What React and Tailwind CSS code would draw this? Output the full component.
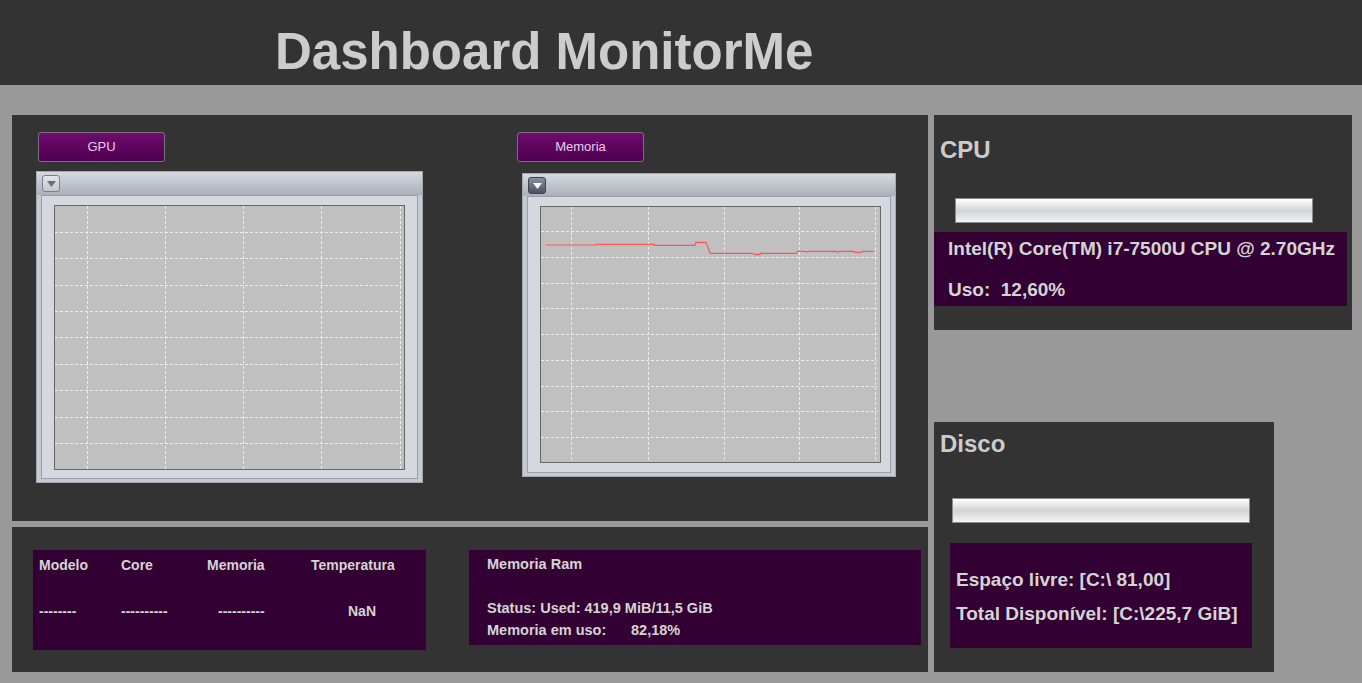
import React from "react";

const gpuChart = {
  w: 387,
  h: 312,
  titleH: 24,
  plotW: 351,
  plotH: 265,
  vx: [33, 111, 189, 267, 346],
  hy: [27, 53, 80, 106, 132, 159, 185, 212, 238],
  line: null,
  focused: false,
};

const memChart = {
  w: 374,
  h: 304,
  titleH: 23,
  plotW: 341,
  plotH: 257,
  vx: [31, 108, 184, 259, 335],
  hy: [25, 51, 77, 102, 128, 154, 180, 205, 231],
  line: [
    [6, 39],
    [56.7, 39],
    [56.7, 38.3],
    [114.3, 38.3],
    [114.3, 39.3],
    [155, 39.3],
    [156, 36.3],
    [166, 36.3],
    [170.3, 47.3],
    [212.7, 47.3],
    [214.3, 48.3],
    [220.3, 48.3],
    [220.3, 47.3],
    [256, 47.3],
    [257.7, 45.3],
    [266, 45.3],
    [267, 46.3],
    [268.3, 45.3],
    [296, 45.3],
    [297.7, 46.3],
    [299.3, 45.3],
    [313.7, 45.3],
    [315, 46.3],
    [321, 46.3],
    [322.7, 45.3],
    [333.7, 45.3],
  ],
  focused: true,
};

function PurpleButton({ label }) {
  return (
    <button className="w-[127px] h-[30px] rounded-[3px] border border-[#7d6f7d] bg-gradient-to-b from-[#6f0c6f] to-[#4f004f] text-[#e8cce8] text-[13px] flex items-center justify-center">
      {label}
    </button>
  );
}

function Chart({ cfg }) {
  return (
    <div
      className="flex flex-col border border-[#a4a8b2] bg-[#c6cad2]"
      style={{ width: cfg.w, height: cfg.h }}
    >
      <div
        className="bg-gradient-to-b from-[#d6d9df] to-[#aab0ba] pl-[5px] pt-[3px]"
        style={{ height: cfg.titleH - 1 }}
      >
        {cfg.focused ? (
          <div className="w-[18px] h-[17px] rounded-[3px] border border-[#3e4350] bg-gradient-to-b from-[#8a90a0] to-[#4c5262] flex items-center justify-center">
            <svg width="9" height="6" viewBox="0 0 9 6">
              <path d="M0 0 L9 0 L4.5 6 Z" fill="#ffffff" />
            </svg>
          </div>
        ) : (
          <div className="w-[18px] h-[17px] rounded-[3px] border border-[#7c808a] bg-gradient-to-b from-[#e4e6ea] to-[#c2c6ce] flex items-center justify-center">
            <svg width="9" height="6" viewBox="0 0 9 6">
              <path d="M0 0 L9 0 L4.5 6 Z" fill="#6a6e78" />
            </svg>
          </div>
        )}
      </div>
      <div className="flex-1 mx-[4px] mb-[3px] border border-[#9a9ea8] bg-[#d5d8df] pl-[12px] pt-[9px]">
        <svg width={cfg.plotW} height={cfg.plotH} className="block">
          <rect
            x="0.5"
            y="0.5"
            width={cfg.plotW - 1}
            height={cfg.plotH - 1}
            fill="#c0c0c0"
            stroke="#676767"
          />
          {cfg.vx.map((x) => (
            <line
              key={"v" + x}
              x1={x + 0.5}
              y1="1"
              x2={x + 0.5}
              y2={cfg.plotH - 1}
              stroke="#ececec"
              strokeDasharray="3 2"
            />
          ))}
          {cfg.hy.map((y) => (
            <line
              key={"h" + y}
              x1="1"
              y1={y + 0.5}
              x2={cfg.plotW - 4}
              y2={y + 0.5}
              stroke="#ececec"
              strokeDasharray="3 2"
            />
          ))}
          {cfg.line && (
            <polyline
              points={cfg.line.map((p) => p.join(",")).join(" ")}
              fill="none"
              stroke="#ff5555"
              strokeWidth="1.2"
            />
          )}
        </svg>
      </div>
    </div>
  );
}

function ProgressBar({ width }) {
  return (
    <div
      className="h-[25px] border border-[#8c8c8c] bg-gradient-to-b from-[#ffffff] via-[#d2d3d7] to-[#f4f4f5]"
      style={{ width }}
    />
  );
}

export default function App() {
  return (
    <div className="min-h-[683px] bg-[#999999] font-['Liberation_Sans',Arial,sans-serif] overflow-hidden">
      <header className="h-[85px] bg-[#333333] pl-[275px] pt-[26px]">
        <h1 className="text-[51px] font-bold leading-none text-[#cccccc]">
          Dashboard MonitorMe
        </h1>
      </header>

      <div className="flex gap-[6px] pl-[12px] pt-[30px]">
        {/* left column */}
        <div className="flex flex-col gap-[6px] w-[916px]">
          <div className="h-[406px] bg-[#333333] flex items-start pt-[17px]">
            <div className="ml-[24px] flex flex-col">
              <div className="ml-[2px]">
                <PurpleButton label="GPU" />
              </div>
              <div className="mt-[9px]">
                <Chart cfg={gpuChart} />
              </div>
            </div>
            <div className="ml-[94px] flex flex-col">
              <PurpleButton label="Memoria" />
              <div className="ml-[5px] mt-[11px]">
                <Chart cfg={memChart} />
              </div>
            </div>
          </div>

          <div className="h-[145px] bg-[#333333] flex items-start pt-[23px] pl-[21px]">
            <div className="flex flex-col w-[393px] h-[100px] bg-[#330033] text-[#d4d4d4] text-[14px] font-bold pl-[6px]">
              <div className="flex h-[20px] items-center mt-[5px]">
                <span className="w-[82px]">Modelo</span>
                <span className="w-[86px]">Core</span>
                <span className="w-[104px]">Memoria</span>
                <span>Temperatura</span>
              </div>
              <div className="flex h-[20px] items-center mt-[26px]">
                <span className="w-[82px]">--------</span>
                <span className="w-[97px]">----------</span>
                <span className="w-[130px]">----------</span>
                <span>NaN</span>
              </div>
            </div>

            <div className="flex flex-col ml-[43px] w-[452px] h-[95px] bg-[#330033] text-[#d4d4d4] text-[14.5px] font-bold pl-[18px]">
              <div className="h-[20px] flex items-center mt-[5px]">Memoria Ram</div>
              <div className="h-[20px] flex items-center mt-[24px]">
                Status: Used: 419,9 MiB/11,5 GiB
              </div>
              <div className="h-[20px] flex items-center mt-[2px]">
                <span className="w-[144px]">Memoria em uso:</span>
                <span>82,18%</span>
              </div>
            </div>
          </div>
        </div>

        {/* right column */}
        <div className="flex flex-col">
          <div className="flex flex-col w-[418px] h-[215px] bg-[#333333] pt-[23px]">
            <h2 className="pl-[6px] text-[24px] font-bold leading-none text-[#cccccc]">CPU</h2>
            <div className="ml-[21px] mt-[36px]">
              <ProgressBar width={358} />
            </div>
            <div className="flex flex-col mt-[9px] w-[413px] h-[74px] bg-[#330033] text-[#d4d4d4] text-[19px] font-bold pl-[14px]">
              <div className="h-[24px] flex items-center mt-[5px]">
                Intel(R) Core(TM) i7-7500U CPU @ 2.70GHz
              </div>
              <div className="h-[24px] flex items-center mt-[17px] whitespace-pre">
                Uso:  12,60%
              </div>
            </div>
          </div>

          <div className="flex flex-col mt-[92px] w-[340px] h-[250px] bg-[#333333] pt-[10px]">
            <h2 className="pl-[6px] text-[24px] font-bold leading-none text-[#cccccc]">Disco</h2>
            <div className="ml-[18px] mt-[42px]">
              <ProgressBar width={298} />
            </div>
            <div className="flex flex-col ml-[16px] mt-[20px] w-[302px] h-[105px] bg-[#330033] text-[#d4d4d4] text-[19px] font-bold pl-[6px]">
              <div className="h-[24px] flex items-center mt-[25px]">
                Espaço livre: [C:\ 81,00]
              </div>
              <div className="h-[24px] flex items-center mt-[10px]">
                Total Disponível: [C:\225,7 GiB]
              </div>
            </div>
          </div>
        </div>
      </div>
    </div>
  );
}
